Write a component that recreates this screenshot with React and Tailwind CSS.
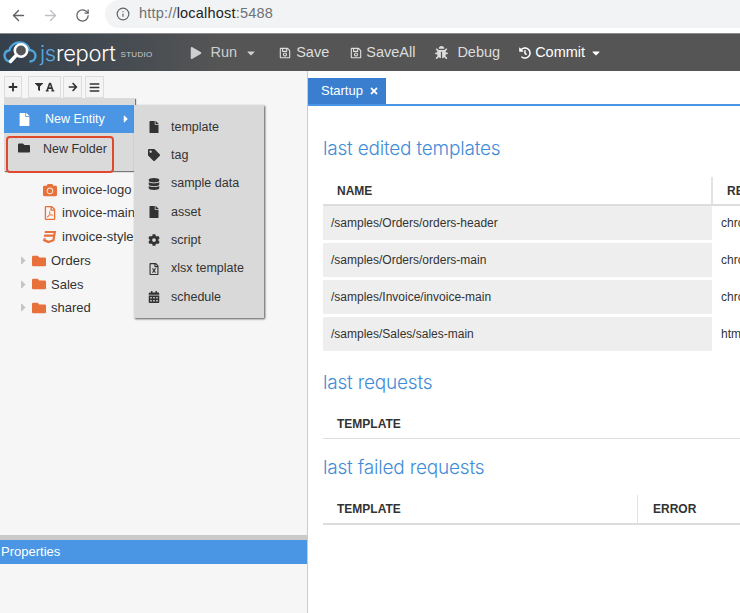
import { ArrowLeft, ArrowRight, RotateCw, Info } from 'lucide-react';
import {
  FaArrowRight, FaBars, FaCalendarAlt, FaCamera, FaCaretDown, FaCaretRight, FaCog, FaCss3, FaDatabase, FaFile,
  FaFilter, FaFolder, FaFont, FaHistory, FaPlay, FaPlus, FaRegFileExcel, FaRegFilePdf, FaRegSave, FaBug, FaTag, FaTimes,
} from 'react-icons/fa';

const sans = "font-['Liberation_Sans',Arial,sans-serif]";

const subItems = [
  { label: 'template', Icon: FaFile },
  { label: 'tag', Icon: FaTag },
  { label: 'sample data', Icon: FaDatabase },
  { label: 'asset', Icon: FaFile },
  { label: 'script', Icon: FaCog },
  { label: 'xlsx template', Icon: FaRegFileExcel },
  { label: 'schedule', Icon: FaCalendarAlt },
];

const templates = [
  ['/samples/Orders/orders-header', 'chrome-pdf'],
  ['/samples/Orders/orders-main', 'chrome-pdf'],
  ['/samples/Invoice/invoice-main', 'chrome-pdf'],
  ['/samples/Sales/sales-main', 'html'],
];

const Logo = () => (
  <svg width="34" height="26" viewBox="0 0 34 26" className="shrink-0">
    <path d="M8 21.5C4 21.5 1.5 19 1.5 15.8 1.5 12.8 3.6 10.6 6.5 10.2 7.5 5.5 11.5 2.5 16.5 2.5 21.5 2.5 25.5 5.5 26.5 10 30 10.3 32.5 12.6 32.5 15.8 32.5 19 30 21.5 26.5 21.5" fill="none" stroke="#4fa6dc" strokeWidth="2.4" />
    <circle cx="18" cy="10.5" r="6.2" fill="#555" stroke="#fff" strokeWidth="2.6" />
    <path d="M13.5 15 7.5 21.5" stroke="#fff" strokeWidth="3.4" strokeLinecap="round" />
  </svg>
);

const ToolButton = ({ children, className = '' }) => (
  <div className={`flex h-[22px] items-center justify-center gap-[2px] border border-[#dddddd] bg-[#f4f4f4] text-[#333333] ${className}`}>{children}</div>
);

const HeaderItem = ({ Icon, label, className = '', iconSize = 13, text = 'text-[#dddddd]' }) => (
  <div className={`flex items-center ${text} ${className}`}>
    <Icon size={iconSize} className="shrink-0" />
    <span className="text-[14.5px]">{label}</span>
  </div>
);

const TreeFile = ({ Icon, label, color = 'text-[#e8703a]' }) => (
  <div className="flex h-[23.7px] items-center pl-[43px] text-[13px] text-[#333333]">
    <Icon size={14} className={`mr-[5px] w-[14px] shrink-0 ${color}`} />
    <span>{label}</span>
  </div>
);

const TreeFolder = ({ label }) => (
  <div className="flex h-[23.7px] items-center pl-[19px] text-[13px] text-[#333333]">
    <FaCaretRight size={13} className="mr-[4px] w-[9px] shrink-0 text-[#c4c4c4]" />
    <FaFolder size={14} className="mr-[5px] shrink-0 text-[#e8703a]" />
    <span>{label}</span>
  </div>
);

const HeadCell = ({ children, className = '' }) => (
  <div className={`flex items-center pl-[14px] text-[12px] font-bold text-[#333333] ${className}`}>{children}</div>
);

const Heading = ({ children, className = '' }) => (
  <h2 className={`font-['Inter',sans-serif] text-[19px] leading-[24px] font-light tracking-[-0.2px] text-[#3f8cd8] ${className}`}>{children}</h2>
);

export default function App() {
  return (
    <div className={`flex h-[613px] w-[740px] flex-col overflow-hidden bg-white ${sans}`}>
      <div className="flex h-[33px] shrink-0 items-start bg-white">
        <div className="flex h-[30px] w-[105px] items-center pl-[10px]">
          <ArrowLeft size={17} strokeWidth={2} className="text-[#5f6368]" />
          <ArrowRight size={17} strokeWidth={2} className="ml-[15px] text-[#bdc1c6]" />
          <RotateCw size={15} strokeWidth={2} className="ml-[16px] text-[#5f6368]" />
        </div>
        <div className="flex h-[28px] flex-1 items-center rounded-l-[14px] bg-[#f1f3f4] pl-[11px] text-[14.5px] tracking-[0.2px] text-[#6f7276]">
          <Info size={14} strokeWidth={2} className="mr-[9px] text-[#5f6368]" />
          http://<span className="text-[#222222]">localhost</span>:5488
        </div>
      </div>

      <div className="flex h-[38px] shrink-0 items-center border-t border-[#8a8a8a] bg-gradient-to-r from-[#34404c] via-[#555555] via-[30%] to-[#555555] pl-[3px]">
        <Logo />
        <span className="ml-[3px] font-['Inter',sans-serif] text-[22px] leading-none font-light tracking-[-0.3px] text-white">
          <span className="text-[#56abe0]">js</span>report
        </span>
        <span className="mt-[5px] ml-[5px] text-[8px] tracking-[0.3px] text-[#cccccc]">STUDIO</span>
        <div className="ml-[37px] flex items-center text-[#cfcfcf]">
          <FaPlay size={12} />
          <span className="ml-[9px] text-[14.5px]">Run</span>
          <FaCaretDown size={12} className="ml-[8px]" />
        </div>
        <HeaderItem Icon={FaRegSave} label="Save" className="ml-[22px] gap-[5px]" iconSize={12} />
        <HeaderItem Icon={FaRegSave} label="SaveAll" className="ml-[21px] gap-[4px]" iconSize={12} />
        <HeaderItem Icon={FaBug} label="Debug" className="ml-[20px] gap-[9px]" />
        <HeaderItem Icon={FaHistory} label="Commit" className="ml-[19px] gap-[4px]" iconSize={12} text="text-white" />
        <FaCaretDown size={12} className="ml-[5px] text-white" />
      </div>

      <div className="flex min-h-0 flex-1">
        <div className="relative flex w-[308px] shrink-0 flex-col border-r border-[#cccccc] bg-[#f6f6f6]">
          <div className="flex gap-[6px] pt-[5px] pl-[4px]">
            <ToolButton className="w-[18px]"><FaPlus size={10} /></ToolButton>
            <ToolButton className="w-[33px]"><FaFilter size={8} /><FaFont size={10} /></ToolButton>
            <ToolButton className="-ml-[4px] w-[19px]"><FaArrowRight size={10} /></ToolButton>
            <ToolButton className="-ml-[3px] w-[19px]"><FaBars size={11} /></ToolButton>
          </div>

          <div className="mt-[56px] flex-1">
            <TreeFile Icon={FaFile} label="invoice-data" />
            <TreeFile Icon={FaCamera} label="invoice-logo" />
            <TreeFile Icon={FaRegFilePdf} label="invoice-main" />
            <TreeFile Icon={FaCss3} label="invoice-style" />
            <TreeFolder label="Orders" />
            <TreeFolder label="Sales" />
            <TreeFolder label="shared" />
          </div>

          <div className="h-[5px] bg-[#cacaca]" />
          <div className="flex h-[24px] items-center bg-[#4a96e4] pl-[1px] text-[13px] text-white">Properties</div>
          <div className="h-[49px]" />

          <div className="absolute top-[27px] left-[4px] w-[131px] bg-[#dadada] pt-[7px] shadow-[1px_1px_1px_#777777]">
            <div className="flex h-[28px] items-center bg-[#4a96e4] pl-[14px] text-[12.5px] text-white">
              <FaFile size={13} />
              <span className="ml-[14px]">New Entity</span>
              <FaCaretRight size={12} className="ml-[15px]" />
            </div>
            <div className="flex h-[38px] items-start pt-[7px] pl-[14px] text-[12.5px] text-[#333333]">
              <FaFolder size={12} className="mt-[2px]" />
              <span className="ml-[13px]">New Folder</span>
            </div>
          </div>

          <div className="absolute top-[65px] left-[6px] h-[37px] w-[108px] rounded-[4px] border-2 border-[#e0492e]" />

          <div className="absolute top-[34px] left-[134px] w-[130px] bg-[#d9d9d9] pt-[8px] pb-[7px] shadow-[1px_1px_2px_#555555]">
            {subItems.map(({ label, Icon }) => (
              <div key={label} className="flex h-[28.3px] items-center pl-[14px] text-[12.5px] text-[#333333]">
                <Icon size={12} className="w-[12px] shrink-0" />
                <span className="ml-[11px]">{label}</span>
              </div>
            ))}
          </div>
        </div>

        <div className="min-w-0 flex-1 overflow-hidden">
          <div className="flex h-[35px] border-b-2 border-[#4a96e4] pt-[7px]">
            <div className="flex h-[26px] w-[78px] items-center bg-[#3a7fcf] pl-[13px] text-[13px] text-white">
              Startup
              <FaTimes size={10} className="ml-[6px]" />
            </div>
          </div>

          <div className="w-[560px] pl-[15px]">
            <Heading className="mt-[31px]">last edited templates</Heading>

            <div className="mt-[16px] flex h-[29px] w-[545px] border-b-2 border-[#dddddd]">
              <HeadCell className="w-[390px] border-r-2 border-[#e3e3e3]">NAME</HeadCell>
              <HeadCell>RECIPE</HeadCell>
            </div>
            <div className="flex w-[545px] flex-col gap-[3px]">
              {templates.map(([name, recipe]) => (
                <div key={name} className="flex h-[34px] items-center text-[12px] text-[#333333]">
                  <div className="flex h-full w-[389px] items-center bg-[#eeeeee] pl-[8px]">{name}</div>
                  <div className="pl-[9px]">{recipe}</div>
                </div>
              ))}
            </div>

            <Heading className="mt-[20px]">last requests</Heading>
            <div className="mt-[14px] flex h-[30px] w-[545px] border-b border-[#dddddd]">
              <HeadCell>TEMPLATE</HeadCell>
            </div>

            <Heading className="mt-[17px]">last failed requests</Heading>
            <div className="mt-[15px] flex h-[30px] w-[545px] border-b-2 border-[#dddddd]">
              <HeadCell className="w-[315px] border-r border-[#e3e3e3]">TEMPLATE</HeadCell>
              <HeadCell className="pl-[15px]">ERROR</HeadCell>
            </div>
          </div>
        </div>
      </div>
    </div>
  );
}
